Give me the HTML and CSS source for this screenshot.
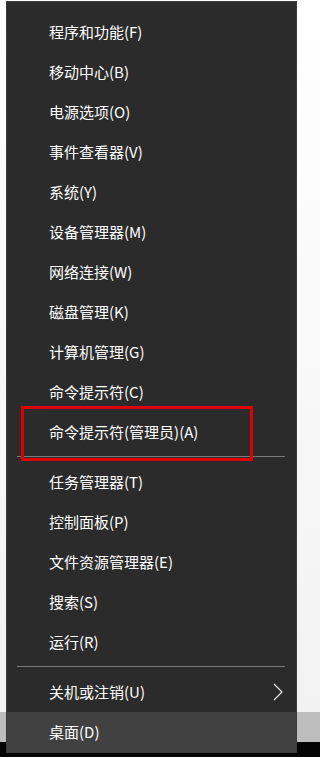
FILE: index.html
```html
<!DOCTYPE html>
<html lang="zh-CN">
<head>
<meta charset="utf-8">
<title>Win+X 菜单</title>
<link rel="stylesheet" href="styles.css">
</head>
<body>
<div class="screen">
  <div class="menu">
    <div class="item">程序和功能(F)</div>
    <div class="item">移动中心(B)</div>
    <div class="item">电源选项(O)</div>
    <div class="item">事件查看器(V)</div>
    <div class="item">系统(Y)</div>
    <div class="item">设备管理器(M)</div>
    <div class="item">网络连接(W)</div>
    <div class="item">磁盘管理(K)</div>
    <div class="item">计算机管理(G)</div>
    <div class="item">命令提示符(C)</div>
    <div class="item">命令提示符(管理员)(A)</div>
    <div class="sep"></div>
    <div class="item">任务管理器(T)</div>
    <div class="item">控制面板(P)</div>
    <div class="item">文件资源管理器(E)</div>
    <div class="item">搜索(S)</div>
    <div class="item">运行(R)</div>
    <div class="sep"></div>
    <div class="item has-sub">
      <span>关机或注销(U)</span>
      <svg class="chev" width="10" height="18" viewBox="0 0 10 18"><path d="M1 1 L9 9 L1 17" fill="none" stroke="#e6e6e6" stroke-width="1.2"/></svg>
    </div>
    <div class="item active">桌面(D)</div>
  </div>
  <div class="annot"></div>
</div>
</body>
</html>
```

FILE: styles.css
```css
html, body {
  margin: 0;
  padding: 0;
}
body {
  width: 305px;
  height: 757px;
  overflow: hidden;
  background: linear-gradient(to bottom, #ffffff 0, #f2f2f2 712px, #bdbdbd 712px, #bdbdbd 742px, #050505 742px);
  font-family: "Noto Sans CJK SC", "Noto Sans", sans-serif;
}
.screen {
  position: relative;
  width: 305px;
  height: 757px;
  padding-top: 1px;
  box-sizing: border-box;
}
.menu {
  margin-left: 6px;
  width: 291px;
  box-sizing: border-box;
  border: 1px solid #3c3c3c;
  background: #2b2b2b;
  padding-top: 10px;
}
.item {
  height: 40px;
  line-height: 40px;
  padding-left: 42px;
  padding-right: 13px;
  color: #ffffff;
  font-size: 15px;
  white-space: nowrap;
  display: flex;
  align-items: center;
  justify-content: space-between;
}
.item.active {
  background: #414141;
}
.sep {
  height: 10px;
  position: relative;
  margin: 0 11px 0 10px;
}
.sep::after {
  content: "";
  position: absolute;
  left: 0;
  right: 0;
  top: 4px;
  height: 1px;
  background: #7a7a7a;
}
.chev {
  display: block;
  margin-right: 0;
}
.annot {
  position: absolute;
  left: 21px;
  top: 406px;
  width: 232px;
  height: 55px;
  box-sizing: border-box;
  border: 3px solid #e00000;
}
```
